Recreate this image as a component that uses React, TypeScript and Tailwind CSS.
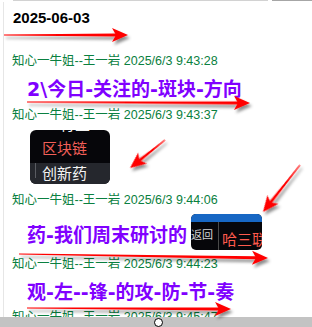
import React from 'react';

type ArrowProps = { x1: number; y1: number; x2: number; y2: number };

// red annotation arrow, tapered shaft + swept head
const Arrow: React.FC<ArrowProps> = ({ x1, y1, x2, y2 }) => {
  const angle = (Math.atan2(y2 - y1, x2 - x1) * 180) / Math.PI;
  const len = Math.hypot(x2 - x1, y2 - y1);
  return (
    <g transform={`translate(${x2} ${y2}) rotate(${angle})`}>
      <polygon points={`${-len},-0.6 -12,-1.5 -12,1.5 ${-len},0.6`} fill="#ff0000" />
      <polygon points="0,0 -16,-7 -12,0 -16,7" fill="#ff0000" />
    </g>
  );
};

const arrows: ArrowProps[] = [
  { x1: 4, y1: 35, x2: 128, y2: 35 },
  { x1: 27, y1: 102, x2: 250, y2: 103 },
  { x1: 165, y1: 140, x2: 130, y2: 168 },
  { x1: 300, y1: 165, x2: 263, y2: 212 },
  { x1: 19, y1: 254, x2: 268, y2: 258 },
  { x1: 27, y1: 308, x2: 231, y2: 309 },
];

const Header: React.FC<{ time: string; className?: string }> = ({ time, className = '' }) => (
  <div
    className={`text-[12.5px] leading-[17px] text-[#0a8040] whitespace-nowrap font-['Liberation_Sans','Noto_Sans_CJK_SC',sans-serif] ${className}`}
  >
    知心一牛姐--王一岩 2025/6/3 {time}
  </div>
);

const Body: React.FC<{ children: React.ReactNode }> = ({ children }) => (
  <div className="text-[19px] leading-[24px] font-bold text-[#8000ff] whitespace-nowrap font-['DejaVu_Sans','Noto_Sans_CJK_SC',sans-serif]">
    {children}
  </div>
);

const App: React.FC = () => {
  return (
    <div className="relative w-[312px] h-[327px] flex flex-col bg-white overflow-hidden">
      {/* top edge */}
      <div className="flex h-[2px] shrink-0">
        <div className="ml-[13px] w-[255px] h-px bg-[#d2d2d2]"></div>
        <div className="ml-[4px] flex-1 h-px bg-[#a6a6a6]"></div>
      </div>

      <div className="flex-1 min-h-0 overflow-hidden pl-[3px]">
        <div className="h-full border-l border-[#e6e6e6] pl-[8px] pt-[7px]">
          <div className="pl-[1px] text-[15px] leading-[18px] font-bold text-black font-['Liberation_Sans',sans-serif]">
            2025-06-03
          </div>

          <Header time="9:43:28" className="mt-[26px]" />
          <div className="mt-[7px] pl-[15px]">
            <Body>2\今日-关注的-斑块-方向</Body>
          </div>

          <Header time="9:43:37" className="mt-[6px]" />
          <div className="mt-[6px] pl-[18px]">
            <div className="w-[80px] h-[54px] rounded-[6px] overflow-hidden bg-[#06060a] flex flex-col font-['Noto_Sans_CJK_SC',sans-serif] text-[15px] leading-[17px]">
              <div className="h-[8px] shrink-0 overflow-hidden pl-[30px]">
                <div className="-mt-[15px] text-[#f2f2f2]">行业</div>
              </div>
              <div className="h-[25px] shrink-0 pl-[12px] pt-[1px] text-[#f25f58]">区块链</div>
              <div className="h-[25px] shrink-0 flex bg-[#25272d] text-[#f4f4f4]">
                <div className="ml-[5px] w-px h-[15px] bg-[#5a5c62]"></div>
                <div className="ml-[6px] pt-[1px]">创新药</div>
              </div>
            </div>
          </div>

          <Header time="9:44:06" className="mt-[8px]" />
          <div className="mt-[5px] pl-[15px] flex items-end">
            <div className="pb-[3px]">
              <Body>药-我们周末研讨的</Body>
            </div>
            <div className="ml-[4px] w-[71px] h-[36px] rounded-[5px] overflow-hidden flex flex-col bg-[#06060a]">
              <div className="h-[8px] shrink-0 bg-[#1767c4]"></div>
              <div className="flex-1 flex">
                <div className="w-[28px] shrink-0 border-r border-[#4a4a4a] pt-[5px] text-[11px] leading-[14px] text-[#d4d4d4] whitespace-nowrap font-['Noto_Sans_CJK_SC',sans-serif]">
                  返回
                </div>
                <div className="pl-[3px] pt-[8px] text-[15px] leading-[18px] text-[#ff5a4d] whitespace-nowrap overflow-hidden font-['Noto_Sans_CJK_SC',sans-serif]">
                  哈三联
                </div>
              </div>
            </div>
          </div>

          <Header time="9:44:23" className="mt-[6px]" />
          <div className="mt-[7px] pl-[15px]">
            <Body>观-左--锋-的攻-防-节-奏</Body>
          </div>

          <Header time="9:45:47" className="mt-[5px]" />
        </div>
      </div>

      {/* bottom bar */}
      <div className="h-[10px] shrink-0 bg-[#c3c3c3] flex items-center justify-center pl-[4px]">
        <div className="w-[9px] h-[9px] rounded-full border border-black bg-white"></div>
      </div>

      {/* annotation arrows */}
      <svg className="absolute inset-0 pointer-events-none" width="312" height="327">
        <defs>
          <filter id="shadow" filterUnits="userSpaceOnUse" x="0" y="0" width="312" height="327">
            <feDropShadow dx="2" dy="3" stdDeviation="1.5" floodColor="#000" floodOpacity="0.45" />
          </filter>
        </defs>
        <g filter="url(#shadow)">
          {arrows.map((a, i) => (
            <Arrow key={i} {...a} />
          ))}
        </g>
      </svg>
    </div>
  );
};

export default App;
